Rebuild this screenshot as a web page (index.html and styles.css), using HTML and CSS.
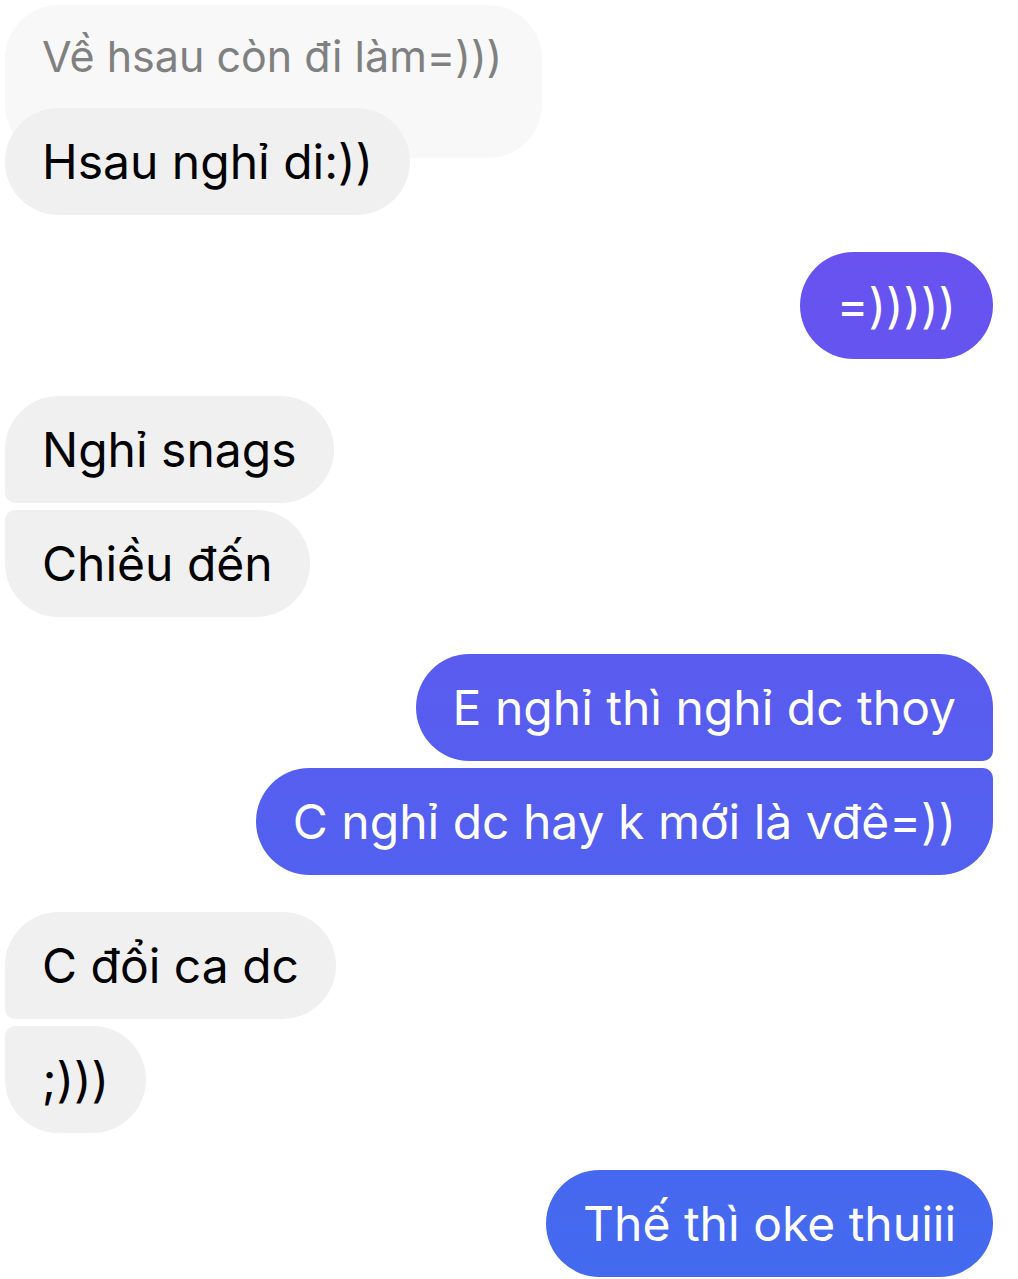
FILE: index.html
```html
<!DOCTYPE html>
<html lang="vi">
<head>
<meta charset="utf-8">
<title>Chat</title>
<link rel="stylesheet" href="styles.css">
</head>
<body>
<div class="chat">
  <div class="group in">
    <div class="quote">Về hsau còn đi làm=)))</div>
    <div class="bubble recv reply">Hsau nghỉ di:))</div>
  </div>
  <div class="group out">
    <div class="bubble sent">=)))))</div>
  </div>
  <div class="group in">
    <div class="bubble recv first">Nghỉ snags</div>
    <div class="bubble recv last">Chiều đến</div>
  </div>
  <div class="group out">
    <div class="bubble sent first">E nghỉ thì nghỉ dc thoy</div>
    <div class="bubble sent last">C nghỉ dc hay k mới là vđê=))</div>
  </div>
  <div class="group in">
    <div class="bubble recv first">C đổi ca dc</div>
    <div class="bubble recv last">;)))</div>
  </div>
  <div class="group out">
    <div class="bubble sent">Thế thì oke thuiii</div>
  </div>
</div>
</body>
</html>
```

FILE: styles.css
```css
html, body {
  margin: 0;
  padding: 0;
  background: #ffffff;
}

body {
  font-family: "Inter", "Noto Sans", "Liberation Sans", sans-serif;
  -webkit-font-smoothing: antialiased;
}

.chat {
  display: flex;
  flex-direction: column;
  gap: 37px;
  padding: 5px 25px 0 5px;
}

.group {
  display: flex;
  flex-direction: column;
  gap: 7px;
}

.group.in {
  align-items: flex-start;
}

.group.out {
  align-items: flex-end;
}

.bubble {
  height: 107px;
  line-height: 107px;
  padding: 0 37px;
  font-size: 48px;
  border-radius: 54px;
  white-space: nowrap;
  box-sizing: border-box;
}

.recv {
  background: #f0f0f0;
  color: #000000;
}

.sent {
  background: linear-gradient(180deg, #724cf0 0%, #436aef 100%) fixed;
  color: #ffffff;
}

.recv.first {
  border-bottom-left-radius: 10px;
}

.recv.last {
  border-top-left-radius: 10px;
}

.sent.first {
  border-bottom-right-radius: 10px;
}

.sent.last {
  border-top-right-radius: 10px;
}

.quote {
  background: #f8f8f8;
  color: #808080;
  font-size: 43px;
  line-height: 102px;
  height: 153px;
  padding: 0 40px 0 37px;
  border-radius: 54px;
  box-sizing: border-box;
  white-space: nowrap;
}

.bubble.reply {
  margin-top: -57px;
  position: relative;
}
```
